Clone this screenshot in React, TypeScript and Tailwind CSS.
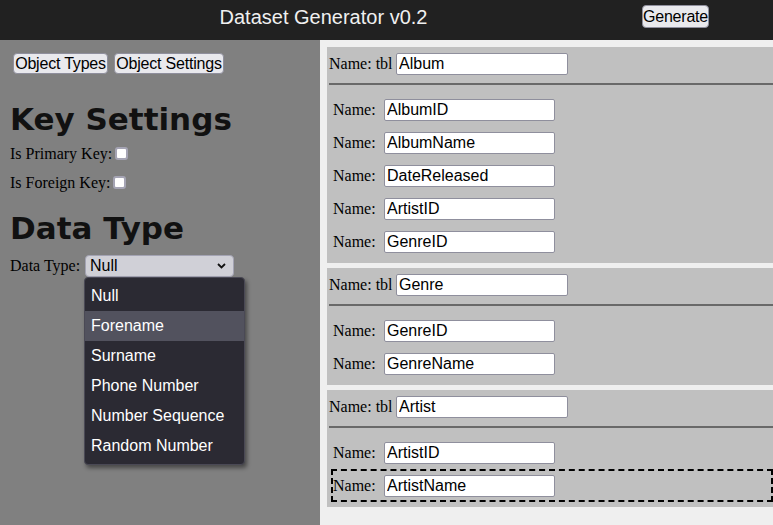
import React from "react";

type Table = {
  name: string;
  fields: string[];
  selected?: number;
};

const tables: Table[] = [
  { name: "Album", fields: ["AlbumID", "AlbumName", "DateReleased", "ArtistID", "GenreID"] },
  { name: "Genre", fields: ["GenreID", "GenreName"] },
  { name: "Artist", fields: ["ArtistID", "ArtistName"], selected: 1 },
];

const dataTypes = ["Null", "Forename", "Surname", "Phone Number", "Number Sequence", "Random Number"];

function UiButton({ children, className = "" }: { children: React.ReactNode; className?: string }) {
  return (
    <button
      className={
        "flex items-center justify-center whitespace-nowrap rounded-[4px] border border-[#8f8f9d] bg-[#e9e9ed] px-0 font-['Liberation_Sans',Arial,sans-serif] text-[16px] leading-[19px] tracking-[-0.2px] text-black " +
        className
      }
    >
      {children}
    </button>
  );
}

function TextBox({ value, wide }: { value: string; wide?: boolean }) {
  return (
    <input
      readOnly
      value={value}
      className={
        "h-[22px] rounded-[2px] border border-[#8f8f9d] bg-white px-[2px] font-['Liberation_Sans',Arial,sans-serif] text-[16px] text-black outline-none " +
        (wide ? "w-[172px]" : "w-[171px]")
      }
    />
  );
}

function Checkbox() {
  return (
    <input
      type="checkbox"
      readOnly
      className="ml-[3px] h-[13px] w-[13px] shrink-0 appearance-none rounded-[3px] border-2 border-[#a5a4b4] bg-white"
    />
  );
}

function TableCard({ table }: { table: Table }) {
  return (
    <div className="bg-[#c0c0c0] pb-[5px] pt-[6px]">
      <div className="flex h-[22px] items-center pl-[2px]">
        <span className="w-[67px] whitespace-nowrap">Name: tbl</span>
        <TextBox value={table.name} wide />
      </div>
      <div className="ml-[2px] mt-[8px] h-[2px] bg-[#696969]" />
      <div className="mt-[8px]">
        {table.fields.map((field, i) => (
          <div
            key={field}
            className={
              "ml-[4px] flex h-[33px] items-center border-2 " +
              (i === table.selected ? "border-dashed border-black" : "border-transparent")
            }
          >
            <span className="w-[51px]">Name:</span>
            <TextBox value={field} />
          </div>
        ))}
      </div>
    </div>
  );
}

export default function App() {
  return (
    <div className="flex min-h-screen flex-col overflow-hidden font-['Liberation_Serif','Times_New_Roman',serif] text-[16px] text-black">
      <header className="flex h-10 shrink-0 bg-[#212121]">
        <div className="w-[642px] pl-[5px] pt-[6px] text-center font-['Liberation_Sans',Arial,sans-serif] text-[20px] leading-[23px] text-[#f0f0f0]">
          Dataset Generator v0.2
        </div>
        <UiButton className="mt-[5px] h-[23px] w-[67px]">Generate</UiButton>
      </header>

      <div className="flex flex-1">
        <aside className="w-[320px] shrink-0 bg-[#808080] pl-[10px] pt-[13px]">
          <div className="flex gap-[6px] pl-[3px]">
            <UiButton className="h-[21px] w-[95px]">Object Types</UiButton>
            <UiButton className="h-[21px] w-[110px]">Object Settings</UiButton>
          </div>

          <h1 className="mt-[27px] font-['DejaVu_Sans',sans-serif] text-[31px] font-bold leading-[36px] text-[#111]">
            Key Settings
          </h1>
          <div className="mt-[7px] flex h-[19px] items-center">
            <span>Is Primary Key:</span>
            <Checkbox />
          </div>
          <div className="mt-[10px] flex h-[19px] items-center">
            <span>Is Foreign Key:</span>
            <Checkbox />
          </div>

          <h1 className="mt-[18px] font-['DejaVu_Sans',sans-serif] text-[31px] font-bold leading-[36px] text-[#111]">
            Data Type
          </h1>
          <div className="mt-[9px] flex h-[22px] items-center">
            <span className="w-[75px]">Data Type:</span>
            <div className="relative">
              <div className="flex h-[22px] w-[149px] items-center justify-between rounded-[4px] border border-[#a3a3b3] bg-[#d0d0d7] pl-[4px] pr-[7px] font-['Liberation_Sans',Arial,sans-serif] text-[16px] text-black">
                <span>Null</span>
                <svg width="9" height="6" viewBox="0 0 9 6" fill="none">
                  <path d="M1 1l3.5 3.5L8 1" stroke="#111" strokeWidth="1.8" />
                </svg>
              </div>
              <ul className="absolute left-[-1px] top-[22px] z-10 w-[161px] rounded-[4px] border border-[#4a4955] bg-[#2b2a33] py-[3px] font-['Liberation_Sans',Arial,sans-serif] text-[16px] text-white shadow-[2px_3px_4px_rgba(0,0,0,0.45)]">
                {dataTypes.map((t) => (
                  <li
                    key={t}
                    className={"flex h-[30px] items-center px-[6px] " + (t === "Forename" ? "bg-[#52525e]" : "")}
                  >
                    {t}
                  </li>
                ))}
              </ul>
            </div>
          </div>
        </aside>

        <main className="flex flex-1 flex-col gap-[5px] bg-[#efefef] pl-[7px] pt-[7px]">
          {tables.map((t) => (
            <TableCard key={t.name} table={t} />
          ))}
        </main>
      </div>
    </div>
  );
}
